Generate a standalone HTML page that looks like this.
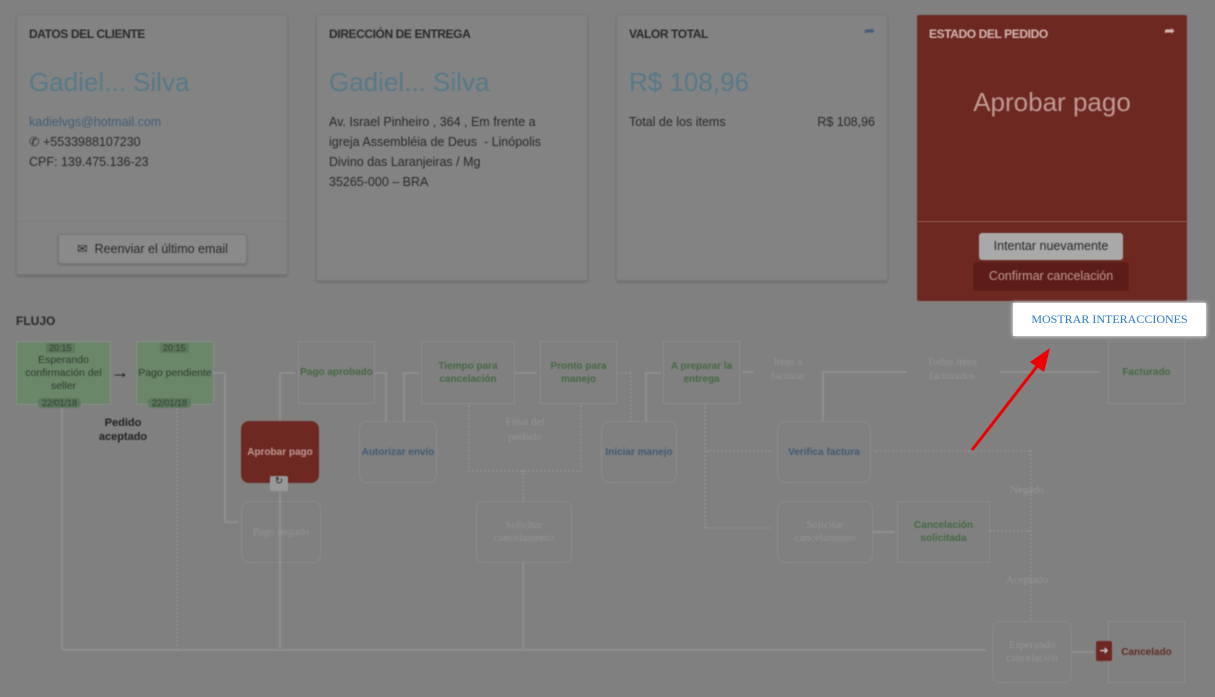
<!DOCTYPE html>
<html><head><meta charset="utf-8"><style>
body{margin:0;width:1215px;height:697px;background:#808080;font-family:"Liberation Sans",sans-serif;position:relative;overflow:hidden}
#w{position:absolute;left:0;top:0;width:1215px;height:697px;filter:blur(0.6px) saturate(0.8)}
.a{position:absolute}
.card{position:absolute;background:#838383;border:1px solid #787878;box-shadow:0 2px 2px rgba(0,0,0,.15);border-radius:3px}
.ttl{position:absolute;left:12px;top:12px;font-size:12px;color:#2a2a2a;letter-spacing:-.4px;font-weight:bold}
.big{position:absolute;left:12px;top:52px;font-size:26px;color:#4f7a8c}
.t{font-size:12.5px;color:#2a2a2a;line-height:20px}
.n{position:absolute;border:1px solid #8c8c8c;box-sizing:border-box;display:flex;align-items:center;justify-content:center;text-align:center;font-size:10px;font-weight:bold;line-height:13px;padding:0 6px}
.r{border-radius:8px}
.g{color:#3f6b3f}.b{color:#3e5a7a}.f{color:#959595;font-weight:normal;font-family:"Liberation Serif",serif;font-size:11px;padding:0 12px}
.ln{position:absolute;background:#8f8f8f}
.d{position:absolute;border:0 dotted #8f8f8f}
</style></head><body><div id="w">
<div class="card" style="left:16px;top:14px;width:270px;height:259px">
<div class="ttl">DATOS DEL CLIENTE</div><div class="big">Gadiel... Silva</div>
<div class="a t" style="left:12px;top:97px"><span style="color:#3e5f80">kadielvgs@hotmail.com</span><br>&#9990; +5533988107230<br>CPF: 139.475.136-23</div>
<div class="a" style="left:0;top:206px;width:270px;border-top:1px solid #7a7a7a"></div>
<div class="a" style="left:41px;top:219px;width:187px;height:28px;background:#8a8a8a;border:1px solid #777;border-radius:3px;font-size:12.5px;color:#2a2a2a;line-height:28px;text-align:center;box-shadow:0 1px 2px rgba(0,0,0,.2)">&#9993;&nbsp; Reenviar el último email</div>
</div>
<div class="card" style="left:316px;top:14px;width:270px;height:265px">
<div class="ttl">DIRECCIÓN DE ENTREGA</div><div class="big">Gadiel... Silva</div>
<div class="a t" style="left:12px;top:97px">Av. Israel Pinheiro , 364 , Em frente a<br>igreja Assembléia de Deus &nbsp;- Linópolis<br>Divino das Laranjeiras / Mg<br>35265-000 – BRA</div>
</div>
<div class="card" style="left:616px;top:14px;width:270px;height:265px">
<div class="ttl">VALOR TOTAL</div><div class="a" style="right:12px;top:8px;color:#3e5f80;font-size:13px">&#10150;</div><div class="big">R$ 108,96</div>
<div class="a t" style="left:12px;top:97px;width:246px">Total de los items<span style="float:right">R$ 108,96</span></div>
</div>
<div class="a" style="left:917px;top:15px;width:270px;height:286px;background:#7b251c;border-radius:2px">
<div class="ttl" style="color:#d9b5b0">ESTADO DEL PEDIDO</div><div class="a" style="right:12px;top:8px;color:#d9b5b0;font-size:13px">&#10150;</div>
<div class="a" style="left:0;width:270px;top:72px;text-align:center;font-size:26px;color:#c89790">Aprobar pago</div>
<div class="a" style="left:0;top:206px;width:270px;border-top:1px solid #9a5a52"></div>
<div class="a" style="left:62px;top:218px;width:144px;height:27px;background:#a9a9a9;border-radius:3px;font-size:12.5px;color:#2a2a2a;line-height:27px;text-align:center">Intentar nuevamente</div>
<div class="a" style="left:56px;top:247px;width:156px;height:29px;background:#691a13;border-radius:3px;font-size:12.5px;color:#c89790;line-height:29px;text-align:center">Confirmar cancelación</div>
</div>
<div class="a" style="left:16px;top:314px;font-size:12px;color:#2a2a2a;font-weight:bold">FLUJO</div>
<!-- lines -->
<div class="ln" style="left:61px;top:405px;width:2px;height:245px"></div>
<div class="ln" style="left:61px;top:649px;width:925px;height:2px"></div>
<div class="ln" style="left:279px;top:482px;width:2px;height:168px"></div>
<div class="ln" style="left:522px;top:562px;width:2px;height:88px"></div>
<div class="ln" style="left:214px;top:372px;width:10px;height:2px"></div>
<div class="ln" style="left:224px;top:372px;width:2px;height:150px"></div>
<div class="ln" style="left:224px;top:521px;width:14px;height:2px"></div>
<div class="ln" style="left:279px;top:372px;width:2px;height:50px"></div>
<div class="ln" style="left:279px;top:372px;width:16px;height:2px"></div>
<div class="ln" style="left:375px;top:372px;width:10px;height:2px"></div>
<div class="ln" style="left:385px;top:372px;width:2px;height:50px"></div>
<div class="ln" style="left:403px;top:372px;width:2px;height:50px"></div>
<div class="ln" style="left:403px;top:372px;width:16px;height:2px"></div>
<div class="ln" style="left:515px;top:372px;width:22px;height:2px"></div>
<div class="ln" style="left:645px;top:372px;width:2px;height:50px"></div>
<div class="ln" style="left:645px;top:372px;width:16px;height:2px"></div>
<div class="ln" style="left:742px;top:371px;width:12px;height:2px"></div>
<div class="ln" style="left:822px;top:372px;width:2px;height:50px"></div>
<div class="ln" style="left:822px;top:371px;width:85px;height:2px"></div>
<div class="ln" style="left:1000px;top:371px;width:100px;height:2px"></div>
<div class="ln" style="left:873px;top:531px;width:22px;height:2px"></div>
<div class="ln" style="left:1072px;top:651px;width:22px;height:2px"></div>
<div class="d" style="left:176px;top:405px;height:245px;border-left-width:2px"></div>
<div class="d" style="left:630px;top:372px;height:50px;border-left-width:2px"></div>
<div class="d" style="left:617px;top:372px;width:14px;border-top-width:2px"></div>
<div class="d" style="left:704px;top:404px;height:124px;border-left-width:2px"></div>
<div class="d" style="left:706px;top:450px;width:65px;border-top-width:2px"></div>
<div class="d" style="left:706px;top:527px;width:65px;border-top-width:2px"></div>
<div class="d" style="left:875px;top:450px;width:155px;border-top-width:2px"></div>
<div class="d" style="left:990px;top:530px;width:40px;border-top-width:2px"></div>
<div class="d" style="left:1030px;top:450px;height:170px;border-left-width:2px"></div>
<div class="d" style="left:468px;top:405px;width:110px;height:65px;border-width:0 2px 2px 2px"></div>
<div class="d" style="left:522px;top:470px;height:32px;border-left-width:2px"></div>
<!-- nodes -->
<div class="n" style="left:16px;top:341px;width:95px;height:64px;background:#658965;color:#2a3d2a;font-weight:normal;font-size:10.5px;padding:0 3px">Esperando confirmación del seller</div>
<div class="a" style="left:46px;top:343px;font-size:9px;color:#2a3d2a;background:#587a58;padding:0 3px">20:15</div>
<div class="a" style="left:38px;top:398px;font-size:9px;color:#2a3d2a;background:#587a58;padding:0 4px;border-radius:4px">22/01/18</div>
<div class="a" style="left:111px;top:362px;font-size:18px;color:#111;font-weight:bold">&#8594;</div>
<div class="n" style="left:136px;top:341px;width:78px;height:64px;background:#658965;color:#2a3d2a;font-weight:normal;font-size:10.5px;padding:0">Pago pendiente</div>
<div class="a" style="left:160px;top:343px;font-size:9px;color:#2a3d2a;background:#587a58;padding:0 3px">20:15</div>
<div class="a" style="left:148px;top:398px;font-size:9px;color:#2a3d2a;background:#587a58;padding:0 4px;border-radius:4px">22/01/18</div>
<div class="a" style="left:90px;top:416px;width:66px;text-align:center;font-size:11px;font-weight:bold;color:#222;line-height:14px">Pedido aceptado</div>
<div class="n g" style="left:298px;top:341px;width:77px;height:63px;padding:0">Pago aprobado</div>
<div class="n g" style="left:421px;top:341px;width:94px;height:63px">Tiempo para cancelación</div>
<div class="n g" style="left:540px;top:341px;width:77px;height:63px">Pronto para manejo</div>
<div class="n g" style="left:663px;top:341px;width:77px;height:63px">A preparar la entrega</div>
<div class="n g" style="left:1108px;top:341px;width:77px;height:63px">Facturado</div>
<div class="n r" style="left:241px;top:421px;width:78px;height:62px;background:#7b251c;border:none;color:#c89790;padding:0">Aprobar pago</div>
<div class="a" style="left:270px;top:476px;width:18px;height:15px;background:#999;font-size:10px;text-align:center;color:#222;border-radius:2px">&#8635;</div>
<div class="n r b" style="left:359px;top:421px;width:78px;height:62px;padding:0">Autorizar envío</div>
<div class="n r b" style="left:601px;top:421px;width:76px;height:62px;padding:0">Iniciar manejo</div>
<div class="n r b" style="left:777px;top:421px;width:94px;height:62px">Verifica factura</div>
<div class="n r f" style="left:241px;top:501px;width:80px;height:62px;padding:0">Pago negado</div>
<div class="n r f" style="left:476px;top:501px;width:96px;height:62px">Solicitar cancelamento</div>
<div class="n r f" style="left:777px;top:501px;width:96px;height:62px">Solicitar cancelamento</div>
<div class="n g" style="left:897px;top:501px;width:93px;height:62px">Cancelación solicitada</div>
<div class="n r f" style="left:992px;top:621px;width:80px;height:62px;padding:0 8px">Esperando cancelación</div>
<div class="n" style="left:1108px;top:621px;width:77px;height:62px;color:#6a2a22">Cancelado</div>
<div class="a" style="left:1096px;top:641px;width:16px;height:20px;background:#7b251c;border-radius:2px;color:#ccc;font-size:11px;text-align:center;line-height:20px">&#10140;</div>
<div class="a f" style="left:490px;top:415px;width:70px;text-align:center;line-height:15px;padding:0;font-size:11px">Final del período</div>
<div class="a f" style="left:760px;top:355px;width:56px;text-align:center;line-height:14px;padding:0">Itens a facturar</div>
<div class="a f" style="left:912px;top:355px;width:80px;text-align:center;line-height:14px;padding:0">Todos itens facturados</div>
<div class="a f" style="left:1010px;top:484px;padding:0">Negado</div>
<div class="a f" style="left:1006px;top:574px;padding:0">Aceptado</div>
</div>
<div class="a" style="left:1013px;top:303px;width:193px;height:33px;background:#fff;box-shadow:0 0 4px #fff;font-family:'Liberation Serif',serif;font-size:12px;color:#2a7ac8;line-height:33px;text-align:center">MOSTRAR INTERACCIONES</div>
<svg class="a" style="left:960px;top:340px" width="100" height="120"><line x1="12" y1="110" x2="82" y2="20" stroke="#e00" stroke-width="3"/><polygon points="90,8 70,22 84,32" fill="#e00"/></svg>
</body></html>
